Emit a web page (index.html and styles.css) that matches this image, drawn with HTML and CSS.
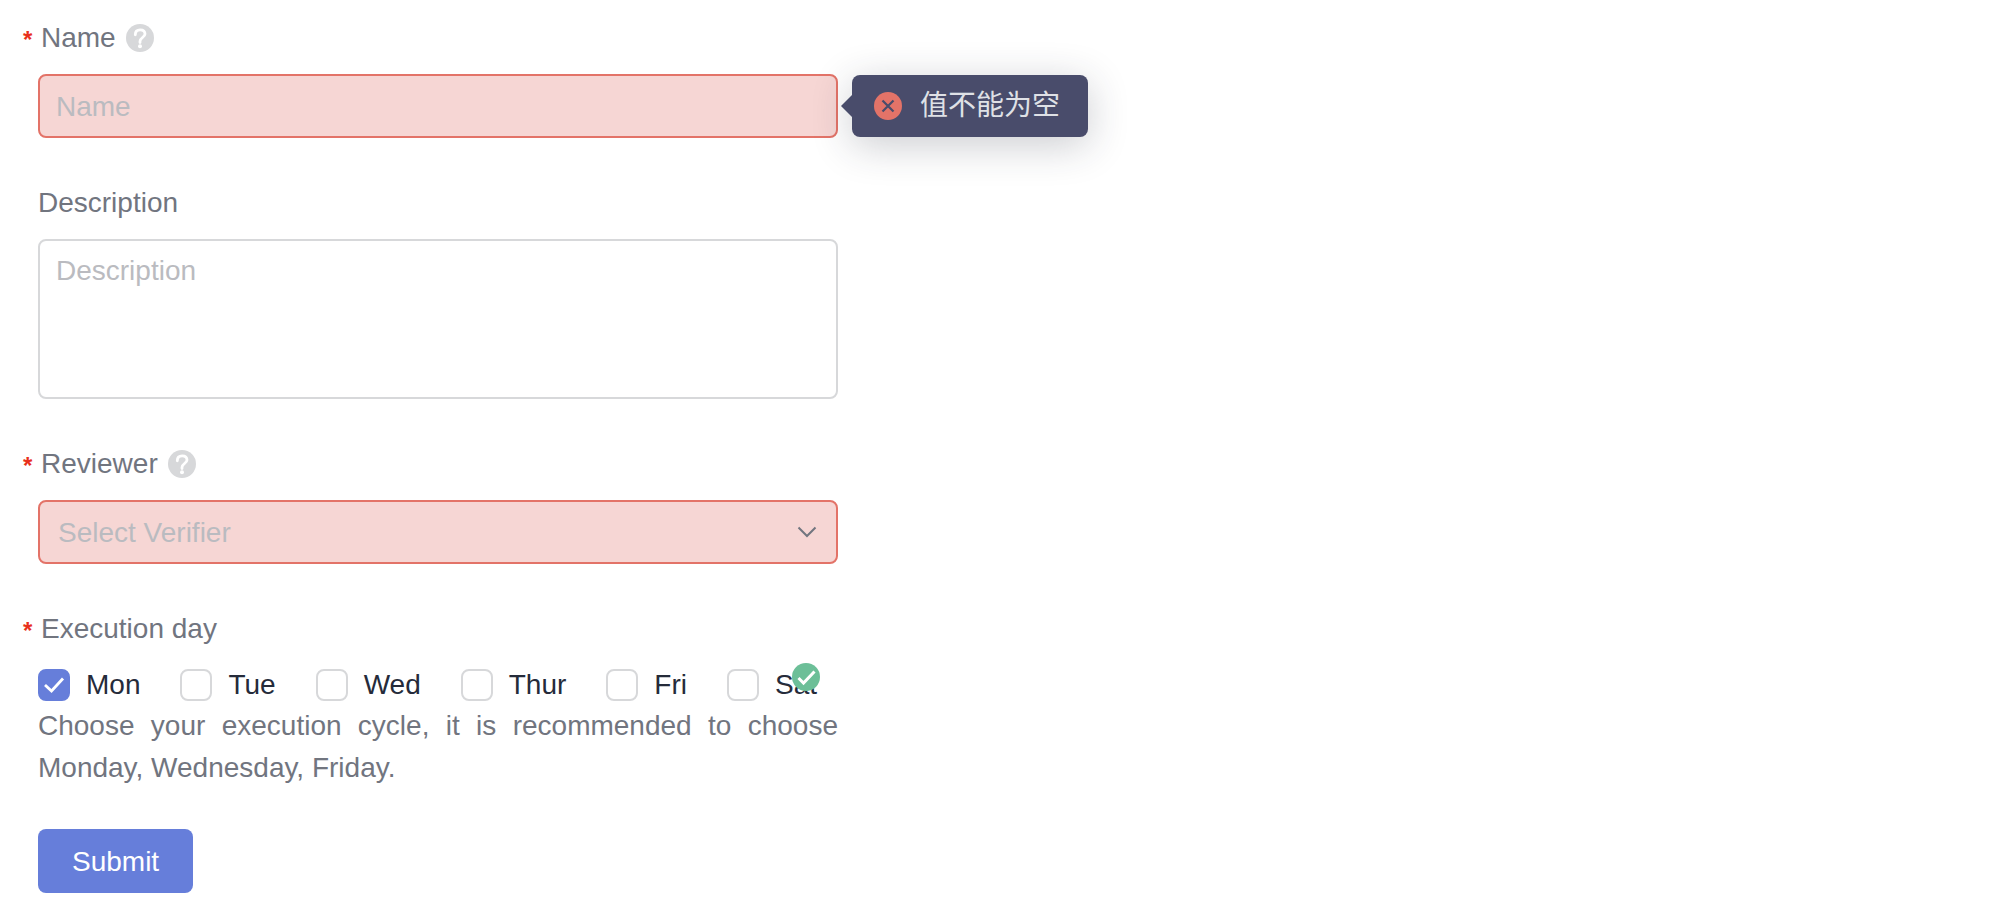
FILE: index.html
```
<!DOCTYPE html>
<html lang="en">
<head>
  <meta charset="UTF-8" />
  <meta name="viewport" content="width=device-width, initial-scale=1.0" />
  <title>Form Validation</title>
  <link rel="stylesheet" href="styles.css">
</head>
<body>
  <form class="form" novalidate>
    <!-- Name -->
    <div class="form-item">
      <div class="form-label required">
        <label for="name">Name</label>
        <svg class="help-icon" viewBox="0 0 28 28" aria-hidden="true">
          <circle cx="14" cy="14" r="14" />
          <path d="M9.300 10.800C9.300 7.500 11.200 5.800 14.200 5.800S19 7.500 19 10C19 13.200 14 13.800 14 17.200V18.500" />
          <circle class="dot" cx="14" cy="22.300" r="2" />
        </svg>
      </div>
      <div class="form-control">
        <input class="input error" type="text" id="name" placeholder="Name" aria-describedby="name-error">
        <div class="popover" id="name-error" role="alert">
          <svg class="status-icon" viewBox="0 0 28 28" aria-hidden="true">
            <circle cx="14" cy="14" r="14" fill="#e37368" />
            <path d="M8.500 8.500L19.500 19.500M19.500 8.500L8.500 19.500" fill="none" stroke="#494c6b" stroke-width="2.200" />
          </svg>
          <span>值不能为空</span>
        </div>
      </div>
    </div>

    <!-- Description -->
    <div class="form-item">
      <div class="form-label">
        <label for="description">Description</label>
      </div>
      <div class="form-control">
        <textarea class="input textarea" id="description" placeholder="Description"></textarea>
      </div>
    </div>

    <!-- Reviewer -->
    <div class="form-item">
      <div class="form-label required">
        <label for="reviewer">Reviewer</label>
        <svg class="help-icon" viewBox="0 0 28 28" aria-hidden="true">
          <circle cx="14" cy="14" r="14" />
          <path d="M9.300 10.800C9.300 7.500 11.200 5.800 14.200 5.800S19 7.500 19 10C19 13.200 14 13.800 14 17.200V18.500" />
          <circle class="dot" cx="14" cy="22.300" r="2" />
        </svg>
      </div>
      <div class="form-control">
        <select class="input select error" id="reviewer">
          <option value="">Select Verifier</option>
        </select>
        <svg class="chevron" viewBox="0 0 20 12" aria-hidden="true">
          <path d="M1.500 1.500L10 10L18.500 1.500" />
        </svg>
      </div>
    </div>

    <!-- Execution day -->
    <div class="form-item" role="group" aria-labelledby="day-label">
      <div class="form-label required">
        <span id="day-label">Execution day</span>
      </div>
      <div class="form-control checkbox-group">
        <label class="checkbox"><input type="checkbox" checked>Mon</label>
        <label class="checkbox"><input type="checkbox">Tue</label>
        <label class="checkbox"><input type="checkbox">Wed</label>
        <label class="checkbox"><input type="checkbox">Thur</label>
        <label class="checkbox"><input type="checkbox">Fri</label>
        <label class="checkbox"><input type="checkbox">Sat</label>
        <svg class="status-icon feedback" viewBox="0 0 28 28" aria-hidden="true">
          <circle cx="14" cy="14" r="14" fill="#6cbf98" />
          <path d="M6.500 15L11.500 20L22.500 8.500" fill="none" stroke="#fff" stroke-width="3" />
        </svg>
      </div>
      <p class="extra-info">Choose your execution cycle, it is recommended to choose Monday, Wednesday, Friday.</p>
    </div>

    <button class="submit" type="submit">Submit</button>
  </form>
</body>
</html>
```
FILE: styles.css
```
* {
  box-sizing: border-box;
}

body {
  margin: 0;
  background-color: #fff;
  color: #71757f;
  font-family: "Liberation Sans", "Noto Sans CJK SC", sans-serif;
  font-size: 28px;
  line-height: 42px;
}

.form {
  max-width: 876px;
  padding: 17px 38px 26px;
}

.form-item {
  margin-bottom: 44px;
}

.form-item:nth-of-type(4) {
  margin-bottom: 40px;
}

.form-label {
  display: flex;
  align-items: center;
  margin-bottom: 15px;
}

/* the asterisk hangs in the left margin */
.required::before {
  content: "*";
  width: 18px;
  margin-left: -15px;
  padding-top: 4px;
  color: #e8301c;
  font-size: 24px;
  font-weight: bold;
  line-height: 38px;
}

.help-icon {
  width: 28px;
  height: 28px;
  margin-left: 10px;
  fill: #d7d8da;
}

.help-icon path {
  fill: none;
  stroke: #fff;
  stroke-width: 2.8;
  stroke-linecap: round;
}

.help-icon .dot {
  fill: #fff;
}

.form-control {
  position: relative;
}

.input {
  display: block;
  width: 100%;
  height: 64px;
  padding: 2px 16px 0;
  border: 2px solid #d7d8da;
  border-radius: 8px;
  background-color: #fff;
  color: #252b3a;
  font: inherit;
  outline: none;
}

.input::placeholder {
  color: #babbc0;
  opacity: 1;
}

.input.error {
  border-color: #e37368;
  background-color: #f6d6d4;
}

.textarea {
  height: 160px;
  padding: 9px 16px;
  resize: none;
}

.select {
  padding: 2px 18px 0;
  color: #babbc0;
  appearance: none;
}

.chevron {
  position: absolute;
  top: 26px;
  right: 21px;
  width: 20px;
  height: 12px;
  fill: none;
  stroke: #71757f;
  stroke-width: 2;
  pointer-events: none;
}

/* validation popover */
.popover {
  position: absolute;
  top: 1px;
  left: calc(100% + 14px);
  display: flex;
  align-items: center;
  gap: 18px;
  height: 62px;
  padding: 0 28px 0 22px;
  border-radius: 8px;
  background-color: #494c6b;
  box-shadow: 0 8px 40px rgba(37, 43, 58, 0.24);
  color: #dfe1e6;
  white-space: nowrap;
}

.popover::before {
  content: "";
  position: absolute;
  top: 20px;
  left: -11px;
  border: 11px solid transparent;
  border-left-width: 0;
  border-right-color: #494c6b;
}

.status-icon {
  flex: none;
  width: 28px;
  height: 28px;
}

.checkbox-group {
  display: flex;
  flex-wrap: wrap;
  gap: 0 40px;
}

.checkbox {
  display: flex;
  align-items: center;
  gap: 16px;
  height: 40px;
  color: #252b3a;
}

.checkbox input {
  width: 32px;
  height: 32px;
  margin: 0;
  border: 2px solid #d7d8da;
  border-radius: 8px;
  background-color: #fff;
  appearance: none;
}

.checkbox input:checked {
  border-color: #667eda;
  background: #667eda url("data:image/svg+xml,%3Csvg xmlns='http://www.w3.org/2000/svg' viewBox='0 0 28 28'%3E%3Cpath d='M5 14L11.500 20L23 7.500' fill='none' stroke='%23fff' stroke-width='2.800'/%3E%3C/svg%3E") center / 28px 28px no-repeat;
}

.feedback {
  position: absolute;
  top: -2px;
  right: 18px;
}

.extra-info {
  margin: 0;
  text-align: justify;
}

.submit {
  height: 64px;
  padding: 2px 34px 0;
  border: none;
  border-radius: 8px;
  background-color: #667eda;
  color: #fff;
  font: inherit;
  cursor: pointer;
}
```
